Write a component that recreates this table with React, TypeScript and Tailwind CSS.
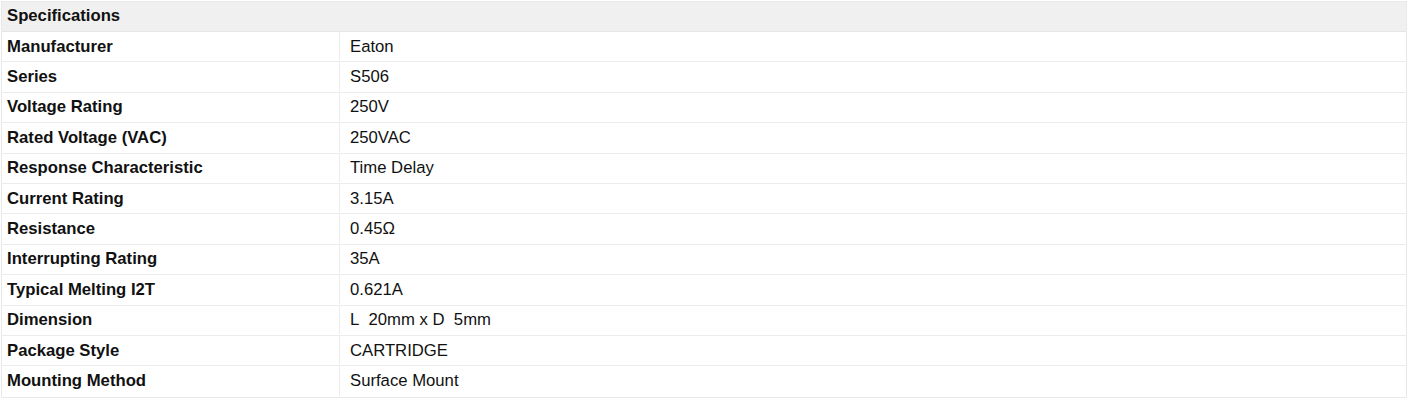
const specs: [string, string][] = [
  ['Manufacturer', 'Eaton'],
  ['Series', 'S506'],
  ['Voltage Rating', '250V'],
  ['Rated Voltage (VAC)', '250VAC'],
  ['Response Characteristic', 'Time Delay'],
  ['Current Rating', '3.15A'],
  ['Resistance', '0.45Ω'],
  ['Interrupting Rating', '35A'],
  ['Typical Melting I2T', '0.621A'],
  ['Dimension', 'L\u00a0\u00a020mm x D\u00a0\u00a05mm'],
  ['Package Style', 'CARTRIDGE'],
  ['Mounting Method', 'Surface Mount'],
];

export default function App() {
  return (
    <div className="w-[1408px] h-[402px] bg-white pt-px pl-px font-['Liberation_Sans',Arial,sans-serif] text-[16.7px] text-[#111]">
      <div className="w-[1406px] border border-[#e8e8e8]">
        <div className="h-[30px] bg-[#f0f0f0] flex items-center pl-[5px] pb-px font-bold border-b border-[#e6e6e6]">
          Specifications
        </div>
        {specs.map(([label, value]) => (
          <div
            key={label}
            className="flex h-[30.4px] pb-px border-b border-[#ececec] last:border-b-0"
          >
            <div className="w-[338px] shrink-0 flex items-center pl-[5px] font-bold border-r border-[#ececec]">
              {label}
            </div>
            <div className="flex-1 flex items-center px-[10px]">{value}</div>
          </div>
        ))}
      </div>
    </div>
  );
}
